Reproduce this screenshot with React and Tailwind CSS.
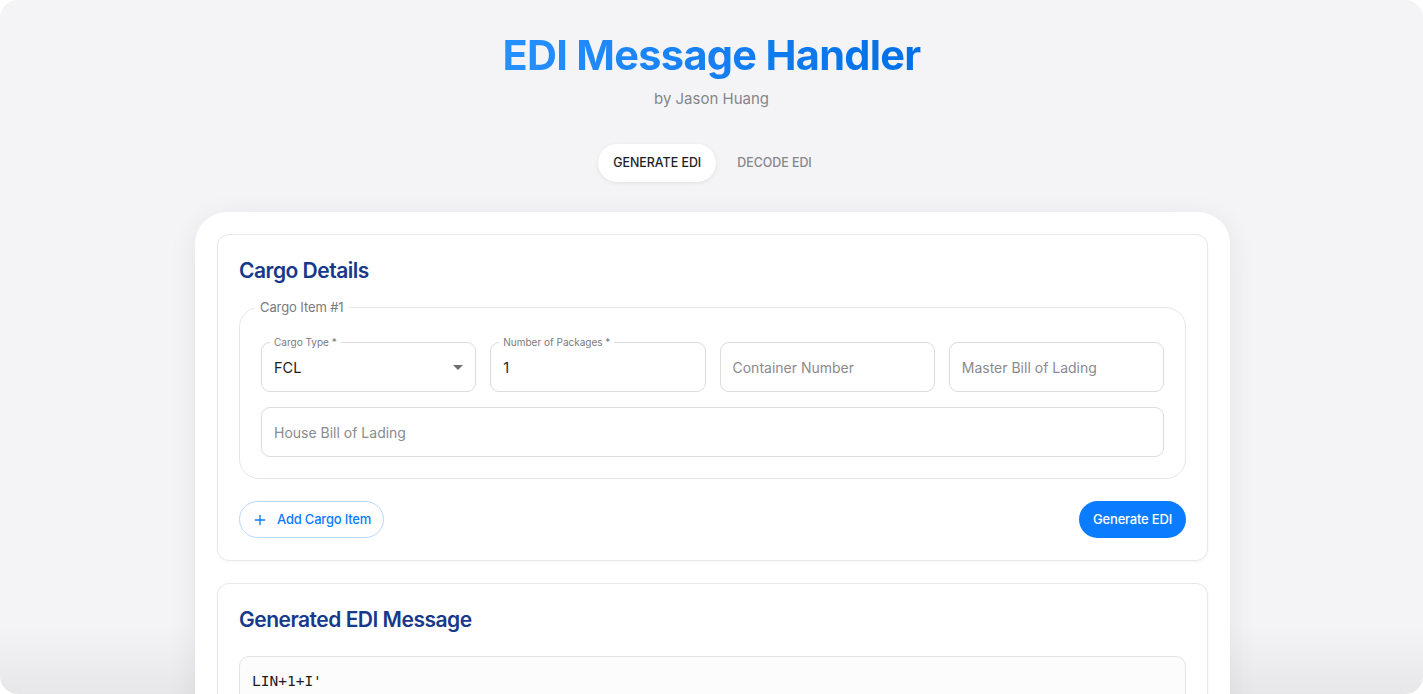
import React from "react";
import { Plus } from "lucide-react";

const font = { fontFamily: "Inter, 'Noto Sans', sans-serif" };

function Field({ label, value, placeholder, select, className = "" }) {
  return (
    <div className={`relative h-[50px] rounded-[9px] border border-[#dcdcde] bg-white ${className}`}>
      {label && (
        <span className="absolute -top-[8px] left-[8px] bg-white px-[4px] text-[10px] leading-[14px] text-[#7a7a80]">
          {label}
        </span>
      )}
      <div className="flex h-full items-center justify-between pl-[12px] pr-[12px]">
        {value ? (
          <span className="pt-[2px] text-[14.5px] text-[#1d1d1f]">{value}</span>
        ) : (
          <span className="pt-[1px] text-[14px] text-[#8a8a8f]">{placeholder}</span>
        )}
        {select && (
          <svg width="10" height="5" viewBox="0 0 10 5">
            <path d="M0 0 L10 0 L5 5 Z" fill="#6f6f74" />
          </svg>
        )}
      </div>
    </div>
  );
}

export default function App() {
  return (
    <div className="h-[694px] w-full bg-white" style={font}>
      <div className="flex h-[694px] w-full flex-col items-center overflow-hidden rounded-[18px] bg-[linear-gradient(to_bottom,#f4f4f6_90%,#e7e7e9)]">
        <h1 className="mt-[29px] bg-gradient-to-r from-[#2690ff] to-[#0070e6] bg-clip-text text-[41.5px] font-bold leading-[52px] tracking-[-0.7px] text-transparent">
          EDI Message Handler
        </h1>
        <p className="mt-[8px] text-[15px] leading-[20px] text-[#86868b]">by Jason Huang</p>

        <div className="mt-[35px] flex items-center gap-[8px]">
          <div className="flex h-[38px] items-center rounded-full bg-white px-[15px] text-[12.4px] font-medium text-[#1d1d1f] shadow-[0_1px_4px_rgba(0,0,0,0.08)]">
            GENERATE EDI
          </div>
          <div className="flex h-[38px] items-center rounded-full px-[13px] text-[12.4px] font-medium text-[#86868b]">
            DECODE EDI
          </div>
        </div>

        <div className="ml-[2px] mt-[30px] w-[1035px] shrink-0 rounded-[32px] bg-white p-[22px] shadow-[0_6px_30px_rgba(0,0,0,0.07)]">
          <div className="rounded-[12px] border border-[#e8e8ea] bg-white px-[21px] pb-[22px] pt-[22px] shadow-[0_1px_3px_rgba(0,0,0,0.04)]">
            <h2 className="text-[21px] font-semibold leading-[28px] tracking-[-0.5px] text-[#17398c]">Cargo Details</h2>
            <fieldset className="mt-[14px] rounded-[20px] border border-[#e6e6e8] px-0 pb-[21px] pt-[27px]">
              <legend className="ml-[15px] px-[5px] text-[13px] leading-[16px] tracking-[-0.1px] text-[#7a7a80]">Cargo Item #1</legend>
              <div className="grid grid-cols-4 gap-x-[14px] gap-y-[15px] px-[21px]">
                <Field label="Cargo Type *" value="FCL" select />
                <Field label="Number of Packages *" value="1" />
                <Field placeholder="Container Number" />
                <Field placeholder="Master Bill of Lading" />
                <Field placeholder="House Bill of Lading" className="col-span-4" />
              </div>
            </fieldset>
            <div className="mt-[22px] flex items-center justify-between">
              <button className="flex h-[37px] items-center gap-[9px] rounded-full border border-[#b9d7fb] bg-white pl-[12px] pr-[12px] text-[13px] font-medium tracking-[-0.2px] text-[#0a7cff]">
                <Plus size={16} strokeWidth={2} />
                Add Cargo Item
              </button>
              <button className="flex h-[37px] items-center rounded-full bg-[#0a7cff] px-[14px] text-[13px] font-medium tracking-[-0.2px] text-white">
                Generate EDI
              </button>
            </div>
          </div>

          <div className="mt-[22px] rounded-[12px] border border-[#e8e8ea] bg-white px-[21px] pb-[21px] pt-[22px] shadow-[0_1px_3px_rgba(0,0,0,0.04)]">
            <h2 className="text-[21px] font-semibold leading-[28px] tracking-[-0.5px] text-[#17398c]">Generated EDI Message</h2>
            <div className="mt-[22px] h-[120px] rounded-[10px] border border-[#e3e3e5] bg-[#fcfcfc] px-[12px] py-[13px]">
              <pre className="text-[14.5px] leading-[22px] text-[#1d1d1f]" style={{ fontFamily: "'DejaVu Sans Mono', 'Liberation Mono', monospace" }}>
                {"LIN+1+I'"}
              </pre>
            </div>
          </div>
        </div>
      </div>
    </div>
  );
}
